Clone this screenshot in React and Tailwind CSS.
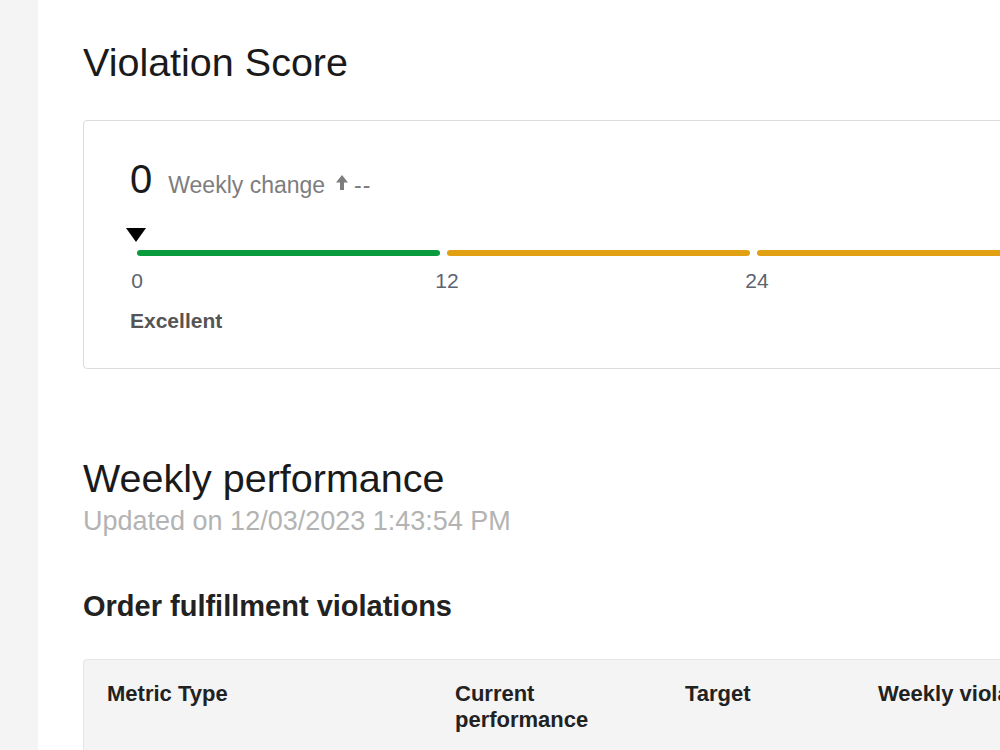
import React from 'react';

const font = { fontFamily: '"Liberation Sans", Arial, sans-serif' };

const segments = [
  { from: 0, color: 'bg-[#0b9b3f]' },
  { from: 12, color: 'bg-[#e2a112]' },
  { from: 24, color: 'bg-[#e2a112]' },
  { from: 36, color: 'bg-[#e2a112]' },
];

function UpArrow() {
  return (
    <svg width="12" height="15" viewBox="0 0 12 15" className="ml-[11px] mr-[6px] self-baseline translate-y-[-3px]">
      <path d="M6 0 L12 7.5 L8 7.5 L8 15 L4 15 L4 7.5 L0 7.5 Z" fill="#7d7d7d" />
    </svg>
  );
}

function ScoreCard() {
  return (
    <div className="w-[1000px] border border-[#dcdcdc] rounded-[4px] pt-[34px] pb-[35px] pl-[46px]">
      <div className="flex items-baseline">
        <span className="text-[40px] leading-[48px] text-[#1a1a1a]">0</span>
        <span className="ml-[16px] text-[23px] text-[#7d7d7d]">Weekly change</span>
        <UpArrow />
        <span className="text-[23px] text-[#7d7d7d] tracking-[1px]">--</span>
      </div>
      <div className="pl-[7px]">
        <svg width="20" height="14" viewBox="0 0 20 14" className="mt-[25px] ml-[-11px]">
          <path d="M0 0 L20 0 L10 14 Z" fill="#000" />
        </svg>
        <div className="flex mt-[8px]">
          {segments.map((s) => (
            <div key={s.from} className="w-[310px] shrink-0">
              <div className={`h-[6px] w-[303px] rounded-full ${s.color}`} />
              <div className="mt-[13px] text-[21px] leading-[24px] text-[#5c6370]">
                <span className="inline-block -translate-x-1/2">{s.from}</span>
              </div>
            </div>
          ))}
        </div>
      </div>
      <div className="mt-[16px] text-[21px] leading-[24px] font-bold text-[#555555]">Excellent</div>
    </div>
  );
}

function MetricsTable() {
  return (
    <div className="w-[1000px] h-[120px] bg-[#f4f4f4] border border-[#e6e6e6] rounded-t-[4px] pt-[21px] pl-[23px]">
      <div className="grid grid-cols-[348px_230px_193px_1fr] text-[22px] leading-[26px] font-bold text-[#222222]">
        <div>Metric Type</div>
        <div>
          Current
          <br />
          performance
        </div>
        <div>Target</div>
        <div className="whitespace-nowrap">Weekly violations</div>
      </div>
    </div>
  );
}

export default function App() {
  return (
    <div className="flex w-screen h-screen overflow-hidden bg-white" style={font}>
      <aside className="w-[38px] shrink-0 bg-[#f4f4f4]" />
      <main className="flex-1 min-w-0 pl-[45px] pt-[38px]">
        <h1 className="text-[39.5px] leading-[48px] text-[#1a1a1a] whitespace-nowrap">Violation Score</h1>
        <div className="mt-[34px]">
          <ScoreCard />
        </div>

        <h2 className="mt-[85px] text-[39.5px] leading-[48px] text-[#1a1a1a] whitespace-nowrap">Weekly performance</h2>
        <p className="mt-[3px] text-[27px] leading-[32px] text-[#b3b3b3] whitespace-nowrap">
          Updated on 12/03/2023 1:43:54 PM
        </p>

        <h3 className="mt-[52px] text-[29px] leading-[34px] font-bold text-[#222222] whitespace-nowrap">
          Order fulfillment violations
        </h3>
        <div className="mt-[36px]">
          <MetricsTable />
        </div>
      </main>
    </div>
  );
}
